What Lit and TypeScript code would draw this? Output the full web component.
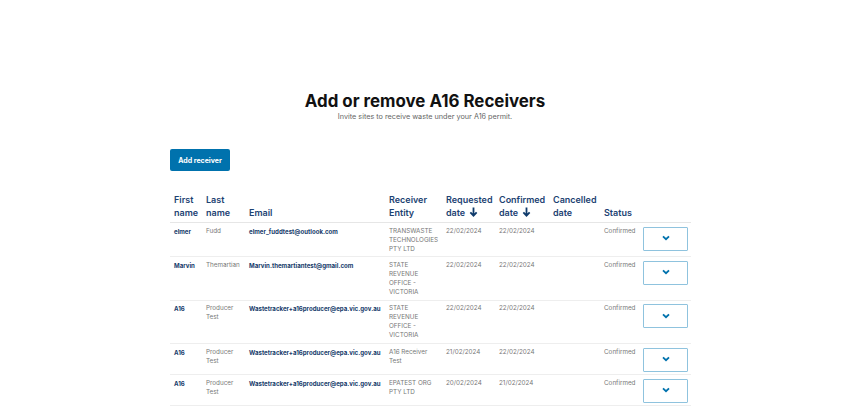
import { LitElement, html, css } from "lit";
import { customElement } from "lit/decorators.js";

const rows = [
  ["elmer", "Fudd", "elmer_fuddtest@outlook.com", "TRANSWASTE TECHNOLOGIES PTY LTD", "22/02/2024", "22/02/2024"],
  ["Marvin", "Themartian", "Marvin.themartiantest@gmail.com", "STATE REVENUE OFFICE - VICTORIA", "22/02/2024", "22/02/2024"],
  ["A16", "Producer Test", "Wastetracker+a16producer@epa.vic.gov.au", "STATE REVENUE OFFICE - VICTORIA", "22/02/2024", "22/02/2024"],
  ["A16", "Producer Test", "Wastetracker+a16producer@epa.vic.gov.au", "A16 Receiver Test", "21/02/2024", "22/02/2024"],
  ["A16", "Producer Test", "Wastetracker+a16producer@epa.vic.gov.au", "EPATEST ORG PTY LTD", "20/02/2024", "21/02/2024"],
];

const arrow = html`<svg class="arrow" viewBox="0 0 10 11"><path d="M5 0.5V9M1.5 5.8L5 9.5L8.5 5.8" fill="none" stroke="#0f3a6b" stroke-width="2"/></svg>`;
const chevron = html`<svg class="chev" viewBox="0 0 8 6"><path d="M1 1.3L4 4.2L7 1.3" fill="none" stroke="#0072ad" stroke-width="1.8"/></svg>`;

@customElement("app-root")
export class AppRoot extends LitElement {
  static styles = css`
    :host { display: block; width: 850px; height: 410px; overflow: hidden; background: #fff; font-family: Inter, "Open Sans", sans-serif; }
    .head { padding-top: 92px; }
    .main { padding: 0 159px 0 170px; }
    h1 { margin: 0; font-size: 16.9px; line-height: 19px; font-weight: 700; color: #111; text-align: center; }
    .sub { margin: 1px 0 0; font-size: 7.25px; line-height: 10px; color: #666; text-align: center; }
    .add { display: block; margin: 27px 0 0; width: 60px; height: 22px; padding: 0; border: 0; border-radius: 2px; background: #0072ad; color: #fff; font: 700 7px Inter, sans-serif; }
    table { margin-top: 22px; width: 521px; table-layout: fixed; border-collapse: collapse; }
    .c1 { width: 32px; } .c2 { width: 43px; } .c3 { width: 140px; } .c4 { width: 57px; } .c5 { width: 53px; }
    .c6 { width: 54px; } .c7 { width: 51px; } .c8 { width: 39px; } .c9 { width: 52px; }
    th { padding: 0 0 3px 4px; font-size: 9px; line-height: 13px; font-weight: 600; color: #1c4272; text-align: left; vertical-align: bottom; border-bottom: 1px solid #e6e6e6; }
    td { padding: 3.5px 0 2.5px 4px; font-size: 6.3px; line-height: 9.1px; color: #777; vertical-align: top; border-bottom: 1px solid #eeeeee; }
    .b { font-size: 6.1px; font-weight: 700; color: #153a6a; white-space: nowrap; }
    .entity { padding-right: 4px; }
    .nw { white-space: nowrap; }
    .arrow { width: 9px; height: 10px; vertical-align: -1px; margin-left: 2px; }
    .more { display: flex; align-items: center; justify-content: center; width: 45px; height: 24px; padding: 0 0 1px; background: #fff; border: 1.3px solid #8fc3de; border-radius: 1px; box-sizing: border-box; }
    .chev { width: 8px; height: 6px; }
  `;

  render() {
    return html`<div class="head">
        <h1>Add or remove A16 Receivers</h1>
        <p class="sub">Invite sites to receive waste under your A16 permit.</p>
      </div>
      <div class="main">
        <button class="add">Add receiver</button>
        <table>
          <colgroup>
            <col class="c1" /><col class="c2" /><col class="c3" /><col class="c4" /><col class="c5" /><col class="c6" /><col class="c7" /><col class="c8" /><col class="c9" />
          </colgroup>
          <thead>
            <tr>
              <th>First name</th><th>Last name</th><th>Email</th><th>Receiver Entity</th>
              <th class="nw">Requested<br />date ${arrow}</th>
              <th class="nw">Confirmed<br />date ${arrow}</th>
              <th>Cancelled date</th><th>Status</th><th></th>
            </tr>
          </thead>
          <tbody>
            ${rows.map(
              (r) => html`<tr>
                <td class="b">${r[0]}</td><td>${r[1]}</td><td class="b">${r[2]}</td><td class="entity">${r[3]}</td>
                <td>${r[4]}</td><td>${r[5]}</td><td></td><td>Confirmed</td>
                <td><button class="more" aria-label="Expand">${chevron}</button></td>
              </tr>`
            )}
          </tbody>
        </table>
      </div>`;
  }
}
